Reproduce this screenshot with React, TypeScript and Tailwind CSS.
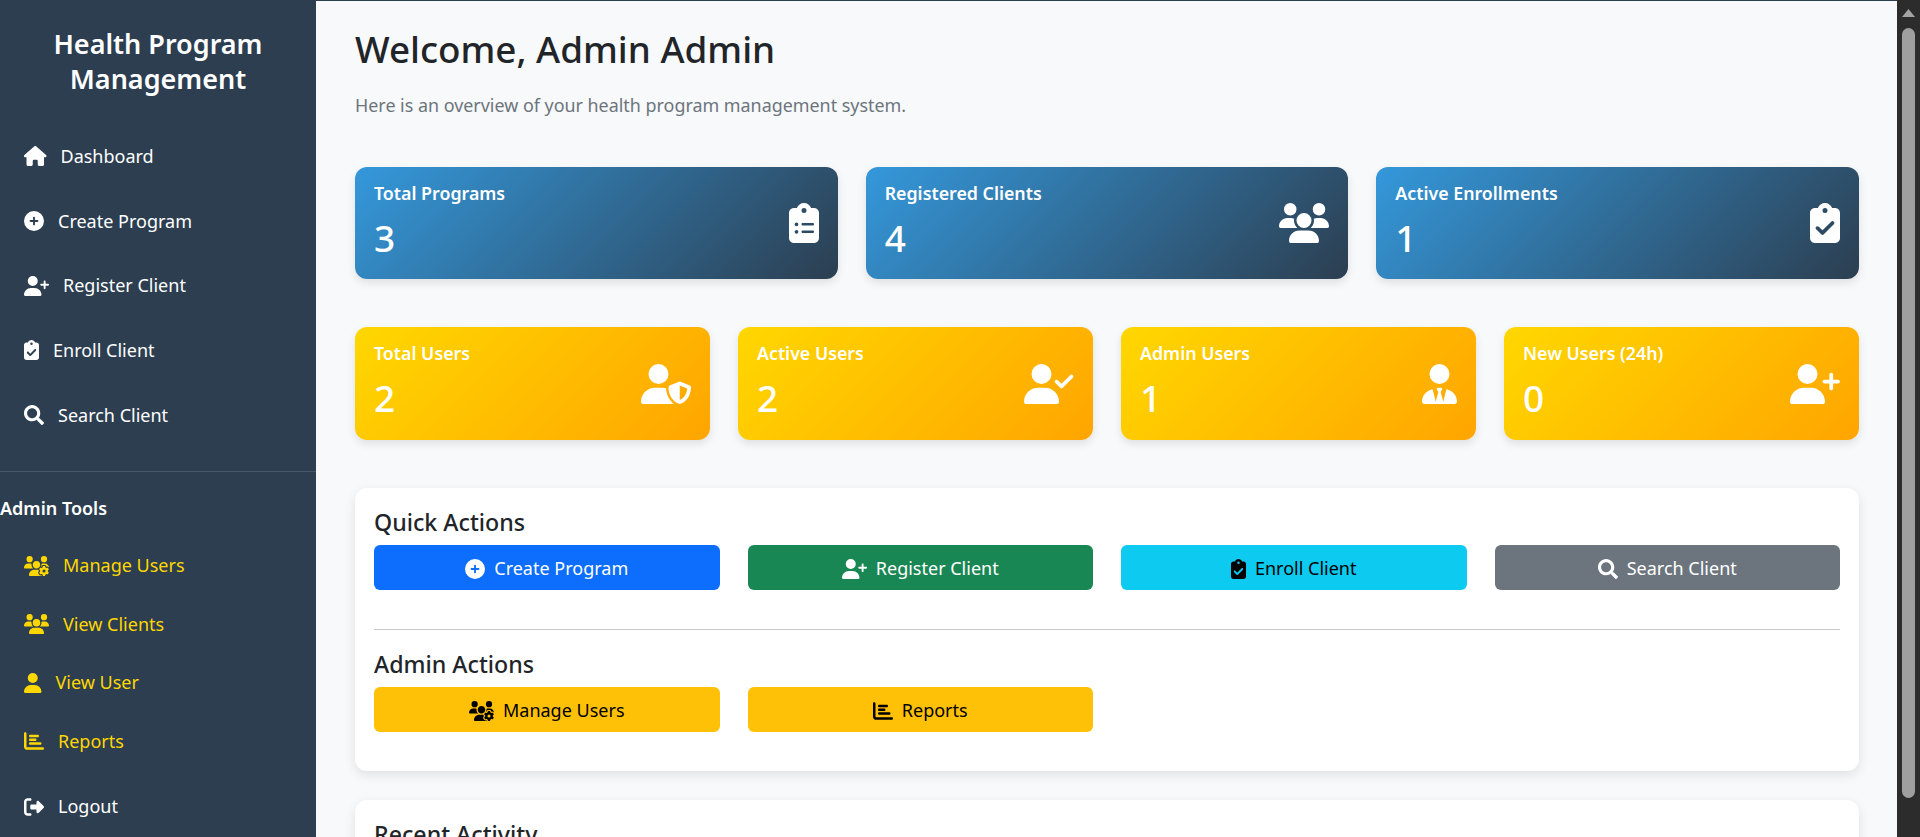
import type { ReactNode } from 'react';
import { FaSearch } from 'react-icons/fa';
import {
  FaHouse,
  FaCirclePlus,
  FaUserPlus,
  FaClipboardCheck,
  FaUsersGear,
  FaUsers,
  FaUser,
  FaChartBar,
  FaRightFromBracket,
  FaClipboardList,
  FaUserShield,
  FaUserCheck,
  FaUserTie,
} from 'react-icons/fa6';

// react-icons draws every glyph in a 1em square, so wide and narrow ones need their real width back
const wide = 'w-[1.25em]';
const clip = 'w-[0.75em]';
const person = 'w-[0.875em]';

const mainLinks = [
  { label: 'Dashboard', icon: <FaHouse className="w-[1.125em]" /> },
  { label: 'Create Program', icon: <FaCirclePlus /> },
  { label: 'Register Client', icon: <FaUserPlus className={wide} /> },
  { label: 'Enroll Client', icon: <FaClipboardCheck className={clip} /> },
  { label: 'Search Client', icon: <FaSearch /> },
];

const adminLinks = [
  { label: 'Manage Users', icon: <FaUsersGear className={wide} /> },
  { label: 'View Clients', icon: <FaUsers className={wide} /> },
  { label: 'View User', icon: <FaUser className={person} /> },
  { label: 'Reports', icon: <FaChartBar /> },
];

const blueStats = [
  { label: 'Total Programs', value: 3, icon: <FaClipboardList className={clip} /> },
  { label: 'Registered Clients', value: 4, icon: <FaUsers className={wide} /> },
  { label: 'Active Enrollments', value: 1, icon: <FaClipboardCheck className={clip} /> },
];

const yellowStats = [
  { label: 'Total Users', value: 2, icon: <FaUserShield className={wide} /> },
  { label: 'Active Users', value: 2, icon: <FaUserCheck className={wide} /> },
  { label: 'Admin Users', value: 1, icon: <FaUserTie className={person} /> },
  { label: 'New Users (24h)', value: 0, icon: <FaUserPlus className={wide} /> },
];

function StatCard({ label, value, icon, className }: { label: string; value: number; icon: ReactNode; className: string }) {
  return (
    <div className={`flex items-center justify-between rounded-xl px-[19px] text-white shadow-[0_4px_8px_rgba(0,0,0,0.1)] ${className}`}>
      <div className="pb-[5px]">
        <div className="text-[17.8px] leading-[26px] font-semibold">{label}</div>
        <div className="mt-[8px] text-[37px] leading-[48px] font-medium">{value}</div>
      </div>
      <div className="text-[40px]">{icon}</div>
    </div>
  );
}

function ActionButton({ label, icon, className }: { label: string; icon: ReactNode; className: string }) {
  return (
    <button className={`flex h-[45px] items-center justify-center gap-[9px] rounded-md pt-[2px] text-[18px] ${className}`}>
      <span className="text-[20px]">{icon}</span>
      {label}
    </button>
  );
}

function SideLink({ label, icon, className }: { label: string; icon: ReactNode; className: string }) {
  return (
    <a className={`flex items-center gap-[14px] pl-6 text-[18px] ${className}`}>
      <span className="text-[20px]">{icon}</span>
      {label}
    </a>
  );
}

export default function App() {
  return (
    <div className="flex h-screen overflow-hidden bg-[#f8f9fa] font-['Noto_Sans',sans-serif] text-[#212529]">
      {/* Sidebar */}
      <aside className="w-[316px] shrink-0 bg-[#2c3e50] text-white">
        <h1 className="pt-[26px] text-center text-[27px] leading-[35px] font-semibold">
          Health Program
          <br />
          Management
        </h1>
        <nav className="mt-[28px]">
          {mainLinks.map((link) => (
            <SideLink key={link.label} label={link.label} icon={link.icon} className="h-[64.7px] text-white" />
          ))}
        </nav>
        <div className="mt-6 border-t border-[#47586a] pt-[23px]">
          <div className="text-[18px] leading-[27px] font-semibold">Admin Tools</div>
          <div className="mt-[14px]">
            {adminLinks.map((link) => (
              <SideLink key={link.label} label={link.label} icon={link.icon} className="h-[58.5px] text-[#ffd700]" />
            ))}
          </div>
        </div>
        <SideLink label="Logout" icon={<FaRightFromBracket />} className="mt-[4px] h-[64.7px] text-white" />
      </aside>

      {/* Main content */}
      <main className="min-w-0 flex-1 overflow-hidden border-t border-[#2c3e50] pt-[26px] pr-[38px] pl-[39px]">
        <h2 className="text-[36.8px] leading-[44px] font-medium">Welcome, Admin Admin</h2>
        <p className="mt-[21px] text-[17.9px] leading-[27px] text-[#6c757d]">
          Here is an overview of your health program management system.
        </p>

        <div className="mt-[48px] grid h-[112px] grid-cols-3 gap-[28px]">
          {blueStats.map((s) => (
            <StatCard key={s.label} {...s} className="bg-[linear-gradient(135deg,#3498db,#2c3e50)]" />
          ))}
        </div>

        <div className="mt-[48px] grid h-[113px] grid-cols-4 gap-[28px]">
          {yellowStats.map((s) => (
            <StatCard key={s.label} {...s} className="bg-[linear-gradient(135deg,#ffd700,#ffa500)]" />
          ))}
        </div>

        <section className="mt-[48px] h-[283px] rounded-xl bg-white px-[19px] pt-[19px] shadow-[0_4px_12px_rgba(0,0,0,0.1)]">
          <h3 className="text-[23.2px] leading-[30px] font-medium">Quick Actions</h3>
          <div className="mt-[8px] grid grid-cols-4 gap-[28px]">
            <ActionButton label="Create Program" icon={<FaCirclePlus />} className="bg-[#0d6efd] text-white" />
            <ActionButton label="Register Client" icon={<FaUserPlus className={wide} />} className="bg-[#198754] text-white" />
            <ActionButton label="Enroll Client" icon={<FaClipboardCheck className={clip} />} className="bg-[#0dcaf0] text-black" />
            <ActionButton label="Search Client" icon={<FaSearch />} className="bg-[#6c757d] text-white" />
          </div>
          <hr className="mt-[39px] border-[#c8c9ca]" />
          <h3 className="mt-[19px] text-[23.2px] leading-[30px] font-medium">Admin Actions</h3>
          <div className="mt-[8px] grid grid-cols-4 gap-[28px]">
            <ActionButton label="Manage Users" icon={<FaUsersGear className={wide} />} className="bg-[#ffc107] text-black" />
            <ActionButton label="Reports" icon={<FaChartBar />} className="bg-[#ffc107] text-black" />
          </div>
        </section>

        <section className="mt-[29px] h-[200px] rounded-xl bg-white px-[19px] pt-[19px] shadow-[0_4px_12px_rgba(0,0,0,0.1)]">
          <h3 className="text-[23.2px] leading-[30px] font-medium">Recent Activity</h3>
        </section>
      </main>

      {/* Scrollbar */}
      <div className="flex w-[23px] shrink-0 flex-col items-center bg-[#2c2c2c]">
        <svg width="13" height="9" viewBox="0 0 13 9" className="mt-[9px]">
          <path d="M6.5 0 L13 8 H0 Z" fill="#a3a3a3" />
        </svg>
        <div className="mt-[10px] h-[770px] w-[13px] rounded-full bg-[#9f9f9f]" />
      </div>
    </div>
  );
}
